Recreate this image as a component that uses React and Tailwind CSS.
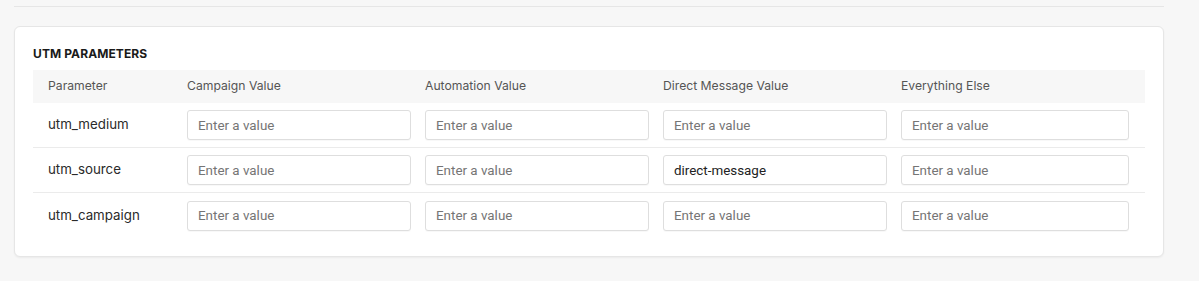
import React from "react";

const rows = [
  { name: "utm_medium", values: ["", "", "", ""] },
  { name: "utm_source", values: ["", "", "direct-message", ""] },
  { name: "utm_campaign", values: ["", "", "", ""] },
];

function Field({ value, last }) {
  return (
    <input
      type="text"
      defaultValue={value}
      placeholder="Enter a value"
      className={`${last ? "w-[228px]" : "w-[224px]"} h-[30px] rounded-[3px] border border-[#dedede] bg-white px-[10px] text-[13.4px] text-[#222] placeholder:text-[#757575] outline-none shadow-[0_1px_1px_rgba(0,0,0,0.03)]`}
      style={{ fontFamily: "Roboto, 'Liberation Sans', sans-serif" }}
    />
  );
}

export default function App() {
  return (
    <div
      className="min-h-[281px] w-[1199px] bg-[#f7f7f7] pl-[14px]"
      style={{ fontFamily: "Inter, 'Liberation Sans', sans-serif" }}
    >
      <div className="h-[7px] w-[1150px] border-b border-[#e6e6e6]" />
      <div className="mt-[19px] w-[1150px] rounded-[6px] border border-[#e6e6e6] bg-white pl-[18px] pr-[18px] pt-[19px] pb-[18px] shadow-[0_1px_2px_rgba(0,0,0,0.05)]">
        <h2 className="mb-[8px] text-[12px] font-bold leading-[16px] tracking-[0.1px] text-[#1a1a1a]">
          UTM PARAMETERS
        </h2>
        <div>
          <div className="flex h-[33px] items-center bg-[#f7f7f7] pl-[15px] text-[12.2px] text-[#555]">
            <div className="w-[139px]">Parameter</div>
            <div className="w-[238px]">Campaign Value</div>
            <div className="w-[238px]">Automation Value</div>
            <div className="w-[238px]">Direct Message Value</div>
            <div>Everything Else</div>
          </div>
          {rows.map((r, i) => (
            <div
              key={r.name}
              className={`flex h-[45px] items-center pl-[15px] ${i < rows.length - 1 ? "border-b border-[#ebebeb]" : ""}`}
            >
              <div className="w-[139px] text-[13.3px] text-[#2a2a2a]">{r.name}</div>
              {r.values.map((v, j) => (
                <div key={j} className={j < 3 ? "w-[238px]" : ""}>
                  <Field value={v} last={j === 3} />
                </div>
              ))}
            </div>
          ))}
        </div>
      </div>
    </div>
  );
}
